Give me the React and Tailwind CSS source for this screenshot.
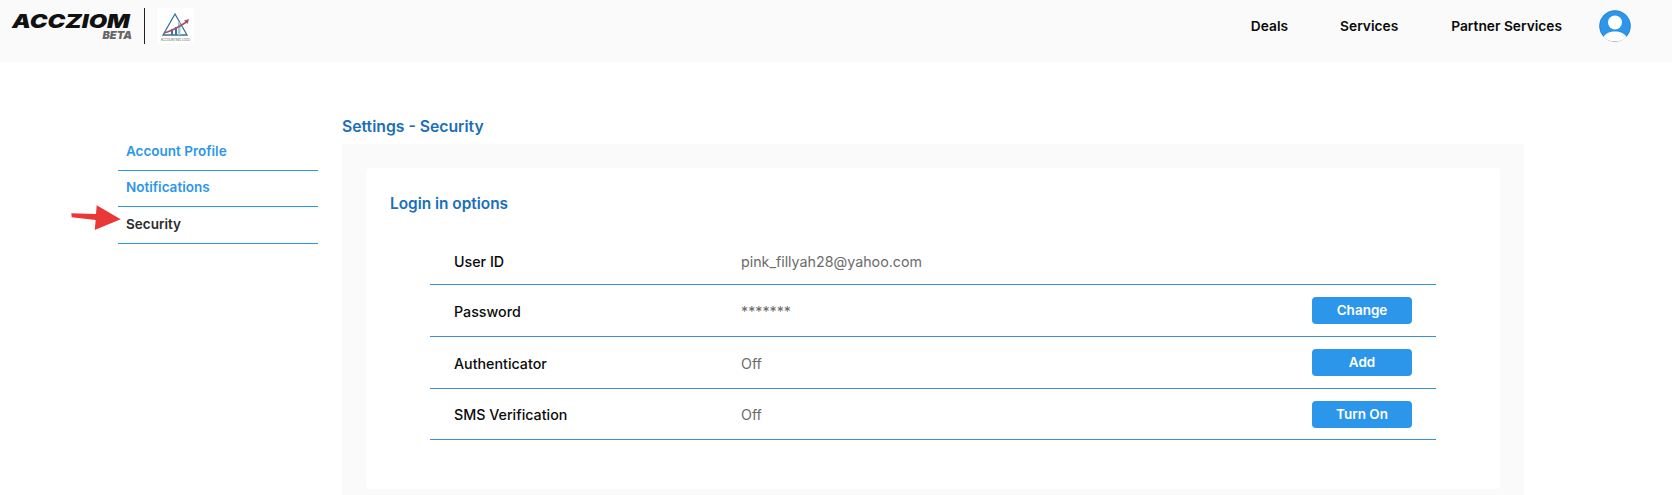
import React from 'react';

const sideLinks = [
  { label: 'Account Profile', active: false },
  { label: 'Notifications', active: false },
  { label: 'Security', active: true },
];

const rows = [
  { label: 'User ID', value: 'pink_fillyah28@yahoo.com', h: 'h-[48px]' },
  { label: 'Password', value: '*******', h: 'h-[52px]', action: 'Change' },
  { label: 'Authenticator', value: 'Off', h: 'h-[52px]', action: 'Add' },
  { label: 'SMS Verification', value: 'Off', h: 'h-[51px]', action: 'Turn On' },
];

const Logo = () => (
  <div className="flex items-start h-full">
    <div className="w-[120px] ml-3 mt-[11px] flex flex-col font-['Inter',sans-serif] italic font-black">
      <span className="pt-px text-[19px] leading-[19px] text-[#111] whitespace-nowrap origin-left scale-x-[1.25]">ACCZIOM</span>
      <span className="text-[11px] leading-[9px] text-right text-[#666]">BETA</span>
    </div>
    <div className="w-px h-9 mt-2 ml-3 bg-[#222]"></div>
    <div className="w-[37px] h-9 mt-2 ml-3 bg-white flex flex-col items-center">
      {/* little chart in a triangle */}
      <svg viewBox="0 0 37 30" className="w-[37px] h-[30px]">
        <path d="M18 6 L6 27 H30 Z" fill="none" stroke="#3d6f8f" strokeWidth="1.3" />
        <rect x="14" y="21" width="2" height="6" fill="#2f78a8" />
        <rect x="18" y="19" width="2" height="8" fill="#2f78a8" />
        <rect x="21" y="14" width="2.5" height="13" fill="#9cc9d8" />
        <path d="M7 25 C15 23 22 19 31 13" fill="none" stroke="#a8506a" strokeWidth="1.6" />
        <path d="M32 11 L27 12.5 L30.5 16 Z" fill="#a8506a" />
      </svg>
      <span className="text-[3px] leading-[4px] text-[#555] whitespace-nowrap">ACCOUNTING LOGO</span>
    </div>
  </div>
);

const Avatar = () => (
  <svg viewBox="0 0 32 32" className="w-8 h-8">
    <circle cx="16" cy="16" r="15.5" fill="#2b96ea" stroke="#1f6fb0" strokeWidth="0.6" />
    <circle cx="16" cy="12.5" r="7" fill="#fff" />
    <path d="M4.5 27 C7 23 11 21.5 16 21.5 C21 21.5 25 23 27.5 27 C24.5 30 20.5 31.5 16 31.5 C11.5 31.5 7.5 30 4.5 27 Z" fill="#fff" />
  </svg>
);

export default function App() {
  return (
    <div className="relative h-[495px] overflow-hidden bg-white font-['Inter',sans-serif]">
      <header className="h-[62px] bg-[#fafafa] flex justify-between">
        <Logo />
        <nav className="flex items-center pb-[10px] pr-[41px] text-[13.75px] leading-5 font-semibold text-[#0b0b0b]">
          <a>Deals</a>
          <a className="ml-[52px]">Services</a>
          <a className="ml-[53px]">Partner Services</a>
          <span className="ml-[37px] flex"><Avatar /></span>
        </nav>
      </header>

      <main className="flex pl-[118px] pt-[52px]">
        <aside className="w-[200px] mt-5 mr-6 shrink-0">
          {sideLinks.map((l) => (
            <div
              key={l.label}
              className={`h-[36.5px] pl-2 pb-[2px] flex items-center border-b border-[#2b96ea] text-[13.5px] font-semibold ${l.active ? 'text-[#2b2b2b]' : 'text-[#2b96ea]'}`}
            >
              {l.label}
            </div>
          ))}
        </aside>

        <section className="w-[1182px]">
          <h1 className="pt-px text-[15.75px] leading-6 font-semibold text-[#1a6fb8] mb-[5px]">Settings - Security</h1>
          <div className="bg-[#fafafa] px-6 pt-6 pb-6">
            <div className="bg-white rounded h-[321px] pt-[25px]">
              <h2 className="pl-6 text-[15.4px] leading-[22px] font-semibold text-[#1a6fb8]">Login in options</h2>
              <div className="ml-16 w-[1006px] mt-[22px]">
                {rows.map((r) => (
                  <div key={r.label} className={`${r.h} flex items-center border-b border-[#3b8fdc] pl-6 pr-6 text-[14.25px]`}>
                    <span className="w-[287px] pt-[2px] font-[450] text-[#0b0b0b]">{r.label}</span>
                    <span className="pt-[2px] text-[#6b6b6b]">{r.value}</span>
                    {r.action && (
                      <button className="ml-auto w-[100px] h-[27px] rounded bg-[#2b96ea] text-white text-[13.5px] font-semibold">
                        {r.action}
                      </button>
                    )}
                  </div>
                ))}
              </div>
            </div>
          </div>
        </section>
      </main>

      {/* red annotation arrow */}
      <svg viewBox="0 0 60 40" className="absolute left-[65px] top-[200px] w-[60px] h-[40px]">
        <path d="M6.3 13.3 L6.7 17.3 L30.7 20 L29.7 30 L55.7 19.3 L31.7 5.3 L31 14 Z" fill="#e93838" />
      </svg>
    </div>
  );
}
